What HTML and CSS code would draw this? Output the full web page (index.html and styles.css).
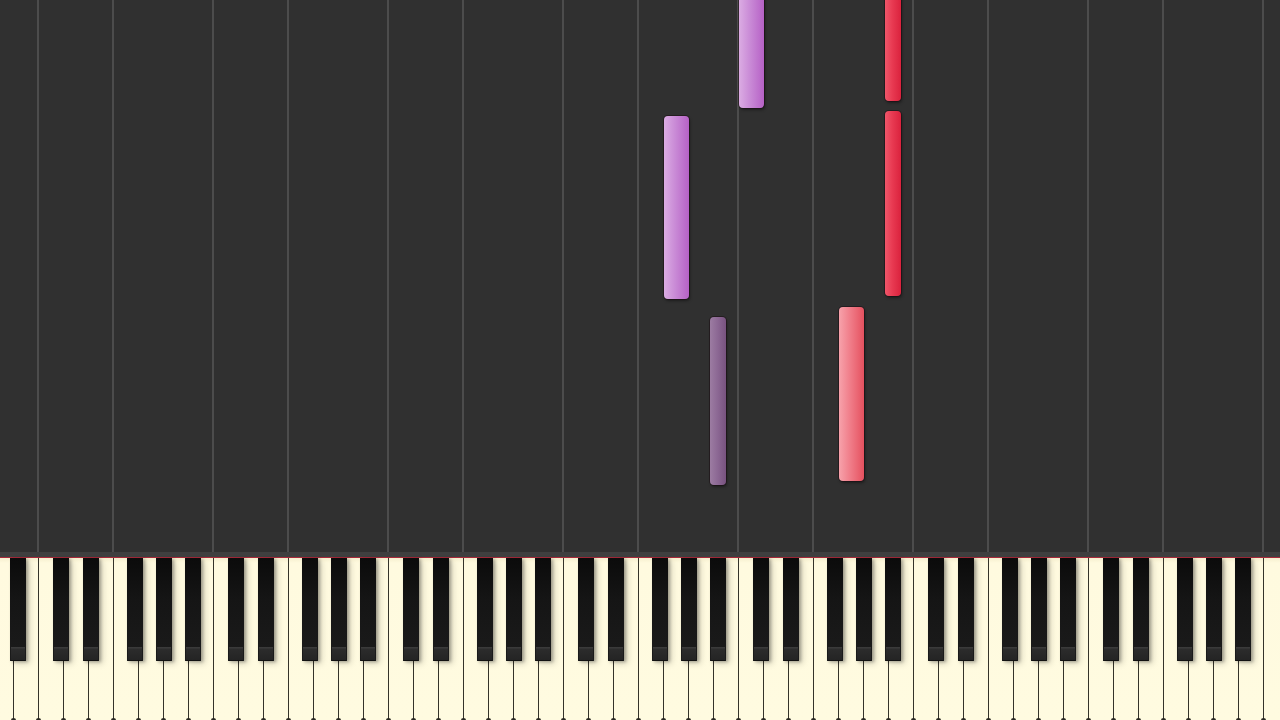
FILE: index.html
```html
<!DOCTYPE html>
<html>
<head>
<meta charset="utf-8">
<title>Piano roll</title>
<link rel="stylesheet" href="styles.css">
</head>
<body>
<div class="app">
  <div class="roll">
    <div class="seg cf"></div><div class="seg fc"></div>
    <div class="seg cf"></div><div class="seg fc"></div>
    <div class="seg cf"></div><div class="seg fc"></div>
    <div class="seg cf"></div><div class="seg fc"></div>
    <div class="seg cf"></div><div class="seg fc"></div>
    <div class="seg cf"></div><div class="seg fc"></div>
    <div class="seg cf"></div><div class="seg fc"></div>
    <div class="seg cf"></div>

    <div class="note violet white-w" style="left:739px;top:-8px;height:116px"></div>
    <div class="note violet white-w" style="left:664px;top:116px;height:183px"></div>
    <div class="note plum black-w" style="left:710px;top:317px;height:168px"></div>
    <div class="note pink white-w" style="left:839px;top:307px;height:174px"></div>
    <div class="note red black-w" style="left:885px;top:-8px;height:109px"></div>
    <div class="note red black-w" style="left:885px;top:111px;height:185px"></div>
  </div>
  <div class="rail"></div>
  <div class="redline"></div>
  <div class="keys">
    <div class="wk a"><span class="bk"></span></div>
    <div class="wk b"></div>

    <div class="wk c"><span class="bk"></span></div><div class="wk d"><span class="bk"></span></div><div class="wk e"></div><div class="wk f"><span class="bk"></span></div><div class="wk g"><span class="bk"></span></div><div class="wk a"><span class="bk"></span></div><div class="wk b"></div>
    <div class="wk c"><span class="bk"></span></div><div class="wk d"><span class="bk"></span></div><div class="wk e"></div><div class="wk f"><span class="bk"></span></div><div class="wk g"><span class="bk"></span></div><div class="wk a"><span class="bk"></span></div><div class="wk b"></div>
    <div class="wk c"><span class="bk"></span></div><div class="wk d"><span class="bk"></span></div><div class="wk e"></div><div class="wk f"><span class="bk"></span></div><div class="wk g"><span class="bk"></span></div><div class="wk a"><span class="bk"></span></div><div class="wk b"></div>
    <div class="wk c"><span class="bk"></span></div><div class="wk d"><span class="bk"></span></div><div class="wk e"></div><div class="wk f"><span class="bk"></span></div><div class="wk g"><span class="bk"></span></div><div class="wk a"><span class="bk"></span></div><div class="wk b"></div>
    <div class="wk c"><span class="bk"></span></div><div class="wk d"><span class="bk"></span></div><div class="wk e"></div><div class="wk f"><span class="bk"></span></div><div class="wk g"><span class="bk"></span></div><div class="wk a"><span class="bk"></span></div><div class="wk b"></div>
    <div class="wk c"><span class="bk"></span></div><div class="wk d"><span class="bk"></span></div><div class="wk e"></div><div class="wk f"><span class="bk"></span></div><div class="wk g"><span class="bk"></span></div><div class="wk a"><span class="bk"></span></div><div class="wk b"></div>
    <div class="wk c"><span class="bk"></span></div><div class="wk d"><span class="bk"></span></div><div class="wk e"></div><div class="wk f"><span class="bk"></span></div><div class="wk g"><span class="bk"></span></div><div class="wk a"><span class="bk"></span></div><div class="wk b"></div>

    <div class="wk c"></div>
  </div>
</div>
</body>
</html>
```

FILE: styles.css
```css
html, body {
  margin: 0;
  padding: 0;
}
body {
  background: #303030;
  width: 1280px;
  height: 720px;
  overflow: hidden;
  font-family: "Liberation Sans", Arial, sans-serif;
}
.app {
  display: flex;
  flex-direction: column;
  height: 720px;
  overflow: hidden;
}
.roll {
  position: relative;
  flex: 0 0 552px;
  display: flex;
  padding-left: 37px;
  overflow: hidden;
  background: #303030;
}
.seg {
  flex: 0 0 auto;
  box-sizing: border-box;
  border-left: 2px solid #4c4c4c;
}
.seg.cf { width: 75px; }
.seg.fc { width: 100px; }

.note {
  position: absolute;
  box-sizing: border-box;
  border-radius: 4px;
  box-shadow: 0 0 0 1px rgba(25, 12, 18, 0.5), 1px 2px 3px rgba(0, 0, 0, 0.4);
}
.white-w { width: 25px; }
.black-w { width: 16px; }
.violet {
  background: linear-gradient(to right, #dbace3 0%, #c98ad6 45%, #b661c6 100%);
}
.plum {
  background: linear-gradient(to right, #9c7ca2 0%, #8b6793 50%, #78527f 100%);
}
.pink {
  background: linear-gradient(to right, #f7a2ab 0%, #f07d89 45%, #e5515f 100%);
}
.red {
  background: linear-gradient(to right, #f0566a 0%, #e83a52 45%, #da223d 100%);
}

.rail {
  flex: 0 0 5px;
  background: #3f3f3f;
}
.redline {
  flex: 0 0 1px;
  background: #a82a3a;
}
.keys {
  flex: 0 0 162px;
  display: flex;
  margin-left: -12px;
  position: relative;
}
.wk {
  position: relative;
  flex: 0 0 25px;
  box-sizing: border-box;
  border-left: 1px solid #35332a;
  background: linear-gradient(to bottom, #f6efcf 0, #fffadf 5px, #fffbe0 100%);
}
.wk::after {
  content: "";
  position: absolute;
  left: -3px;
  bottom: -2px;
  width: 5px;
  height: 4px;
  border-radius: 50%;
  background: #2a2822;
}
.bk {
  position: absolute;
  top: 0;
  width: 16px;
  height: 103px;
  z-index: 2;
  background: linear-gradient(to bottom, #0b0b0b 0, #151515 40%, #1b1b1b 100%);
  box-shadow: 2px 1px 3px rgba(0, 0, 0, 0.3), 4px 3px 6px rgba(0, 0, 0, 0.14);
}
.bk::after {
  content: "";
  position: absolute;
  left: 1px;
  right: 1px;
  bottom: 0;
  height: 13px;
  background: linear-gradient(to bottom, #3a3a3a 0, #3a3a3a 1px, #2c2c2c 2px, #242424 100%);
  border-bottom: 1px solid #111;
}
.c .bk { left: 14px; }
.d .bk { left: 19px; }
.f .bk { left: 13px; }
.g .bk { left: 17px; }
.a .bk { left: 21px; }
```
